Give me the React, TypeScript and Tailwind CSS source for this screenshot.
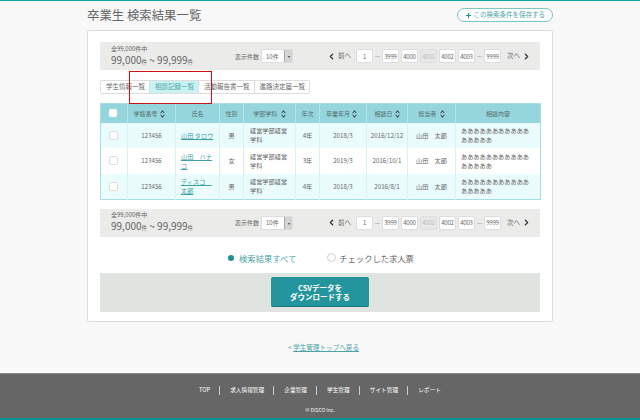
import { ChevronLeft, ChevronRight, Plus } from 'lucide-react';

const ROWS = [
  { name: '山田 タロウ', sex: '男', year: '4年', grad: '2018/3', date: '2016/12/12', tint: true },
  { name: '山田　ハナコ', sex: '女', year: '3年', grad: '2019/3', date: '2016/10/1', tint: false },
  { name: 'ディスコ　太郎', sex: '男', year: '4年', grad: '2018/3', date: '2016/8/1', tint: true },
];

const TABS = ['学生情報一覧', '相談記録一覧', '活動報告書一覧', '進路決定届一覧'];
const FOOTER = ['TOP', '求人情報管理', '企業管理', '学生管理', 'サイト管理', 'レポート'];

function Sort() {
  return (
    <svg viewBox="0 0 6 10" className="ml-[2px] inline-block h-[8px] w-[5px] align-[-2px]" fill="none" stroke="#3f5558" strokeWidth="1.3">
      <path d="M0.7 4l2.3-3 2.3 3M0.7 6l2.3 3 2.3-3" />
    </svg>
  );
}

function PageBox({ label, off }: { label: string; off?: boolean }) {
  return (
    <span className={`flex h-[14px] w-[17px] items-center justify-center rounded-[2px] border border-[#ddd] text-[6px] tracking-[-0.2px] ${off ? 'bg-[#e8e8e8] text-[#bbb]' : 'bg-white text-[#666]'}`}>
      {label}
    </span>
  );
}

function ResultBar() {
  return (
    <div className="flex h-[28px] items-center bg-[#ebecea] pr-[9px] pl-[11px] text-[#666]">
      <div className="w-[124px] shrink-0 pt-[1px]">
        <div className="text-[6px] leading-[8px]">全99,000件中</div>
        <div className="text-[10px] leading-[13px] whitespace-nowrap">
          99,000<span className="text-[5.5px]">件</span> ~ 99,999<span className="text-[5.5px]">件</span>
        </div>
      </div>
      <span className="text-[6px] whitespace-nowrap">表示件数</span>
      <div className="ml-[2px] flex h-[14px] w-[32px] items-center justify-between rounded-[2px] border border-[#ddd] bg-white pl-[4px] text-[6px]">
        10件
        <span className="flex h-full w-[8px] items-center justify-center border-l border-[#aaa] bg-[#d4d4d4] text-[4px] text-[#333]">▾</span>
      </div>
      <div className="ml-auto flex items-center gap-[2px]">
        <ChevronLeft className="h-[9px] w-[9px] text-[#333]" strokeWidth={3.5} />
        <span className="mr-[3px] text-[6.5px]">前へ</span>
        <PageBox label="1" />
        <span className="text-[5px]">…</span>
        <PageBox label="3999" />
        <PageBox label="4000" />
        <PageBox label="4001" off />
        <PageBox label="4002" />
        <PageBox label="4003" />
        <span className="text-[5px]">…</span>
        <PageBox label="9999" />
        <span className="ml-[4px] text-[6.5px]">次へ</span>
        <ChevronRight className="h-[9px] w-[9px] text-[#333]" strokeWidth={3.5} />
      </div>
    </div>
  );
}

export default function App() {
  return (
    <div className="flex h-[420px] w-[640px] flex-col overflow-hidden border-t border-[#0fa3a3] bg-[#f8f8f8] font-['Noto_Sans_CJK_JP',sans-serif] text-[#666]">
      <div className="mx-auto w-[466px]">
        <div className="flex h-[29px] items-center justify-between pb-[1px]">
          <h1 className="text-[12.4px] font-normal">卒業生 検索結果一覧</h1>
          <button className="flex h-[14px] items-center gap-[2px] rounded-full border border-[#7cc5c9] bg-white px-[7px] text-[6.5px] text-[#4ea3a8]">
            <Plus className="h-[7px] w-[7px] text-[#1f8f96]" strokeWidth={4} />
            この検索条件を保存する
          </button>
        </div>

        <main className="relative h-[292px] rounded-[2px] border border-[#ddd] bg-white px-[12px] pt-[11px]">
          <ResultBar />

          <div className="mt-[10px] flex h-[14px] w-fit rounded-[2px] border border-[#ddd] bg-white text-[6.5px]">
            {TABS.map((tab, i) => (
              <span key={tab} className={`flex items-center pr-[4px] pl-[5px] ${i > 0 ? 'border-l border-[#ddd]' : ''} ${i === 1 ? 'bg-[#c9f2f2] text-[#4ea3a8]' : ''}`}>
                {tab}
              </span>
            ))}
          </div>

          <table className="mt-[9px] w-[440px] table-fixed border-collapse border border-[#a5dfe3] text-[6.2px]">
            <colgroup>
              <col className="w-[27px]" />
              <col className="w-[48px]" />
              <col className="w-[44px]" />
              <col className="w-[24px]" />
              <col className="w-[52px]" />
              <col className="w-[24px]" />
              <col className="w-[47px]" />
              <col className="w-[41px]" />
              <col className="w-[48px]" />
              <col className="w-[85px]" />
            </colgroup>
            <thead>
              <tr className="h-[19px] bg-[#95d5dc] text-[6px] text-[#55706f]">
                <th className="border-r border-[#b5e3e7] font-normal">
                  <span className="ml-[8px] block h-[8px] w-[8px] rounded-[2px] bg-white" />
                </th>
                <th className="border-r border-[#b5e3e7] pr-[5px] font-normal">学籍番号<Sort /></th>
                <th className="border-r border-[#b5e3e7] font-normal">氏名</th>
                <th className="border-r border-[#b5e3e7] font-normal">性別</th>
                <th className="border-r border-[#b5e3e7] font-normal">学部学科 <Sort /></th>
                <th className="border-r border-[#b5e3e7] font-normal">年次</th>
                <th className="border-r border-[#b5e3e7] pr-[3px] font-normal">卒業年月<Sort /></th>
                <th className="border-r border-[#b5e3e7] font-normal">相談日<Sort /></th>
                <th className="border-r border-[#b5e3e7] font-normal">担当者 <Sort /></th>
                <th className="font-normal">相談内容</th>
              </tr>
            </thead>
            <tbody>
              {ROWS.map((row) => (
                <tr key={row.name} className={`h-[25.6px] leading-[9px] ${row.tint ? 'bg-[#eafcfc]' : 'bg-white'}`}>
                  <td className="border-r border-[#d8f2f3]">
                    <span className="ml-[8px] block h-[9px] w-[9px] rounded-[2px] border border-[#ddd] bg-white" />
                  </td>
                  <td className="border-r border-[#d8f2f3] text-center">123456</td>
                  <td className="border-r border-[#d8f2f3] px-[5px] text-[#3f9ea5] underline">{row.name}</td>
                  <td className="border-r border-[#d8f2f3] text-center">{row.sex}</td>
                  <td className="border-r border-[#d8f2f3] pr-[5px] pl-[6px]">経営学部経営学科</td>
                  <td className="border-r border-[#d8f2f3] text-center">{row.year}</td>
                  <td className="border-r border-[#d8f2f3] text-center">{row.grad}</td>
                  <td className="border-r border-[#d8f2f3] text-center">{row.date}</td>
                  <td className="border-r border-[#d8f2f3] text-center whitespace-pre">山田　太郎</td>
                  <td className="px-[5px]">ああああああああああああああああ</td>
                </tr>
              ))}
            </tbody>
          </table>

          <div className="mt-[9px]">
            <ResultBar />
          </div>

          <div className="mt-[11px] flex h-[20px] items-center justify-center gap-[31px] text-[8.3px]">
            <label className="flex items-center gap-[4px] text-[#4ea3a8]">
              <span className="flex h-[9px] w-[9px] items-center justify-center rounded-full bg-white">
                <span className="h-[6px] w-[6px] rounded-full bg-[#1f8f96]" />
              </span>
              検索結果すべて
            </label>
            <label className="flex items-center gap-[3px]">
              <span className="h-[9px] w-[9px] rounded-full border border-[#ccc] bg-white" />
              チェックした求人票
            </label>
          </div>

          <div className="mt-[5px] flex h-[39px] items-center justify-center bg-[#e0e4e1]">
            <button className="h-[30px] w-[98px] rounded-[2px] border-b border-[#17777d] bg-[#24959d] text-[7.5px] leading-[9px] font-bold text-white">
              CSVデータを
              <br />
              ダウンロードする
            </button>
          </div>

          <div className="absolute top-[40px] left-[41px] h-[33px] w-[83px] border border-[#d01010]" />
        </main>

        <div className="mt-[21px] pl-[7px] text-center text-[6.6px] text-[#4ea3a8]">
          &lt; <span className="underline">学生管理トップへ戻る</span>
        </div>
      </div>

      <footer className="mt-auto flex h-[47px] flex-col items-center border-t border-[#888] border-b-[2px] border-b-[#0f8f94] bg-[#666] text-white">
        <div className="mt-[12px] flex items-center text-[5.7px]">
          {FOOTER.map((item, i) => (
            <span key={item} className={i > 0 ? 'ml-[9px] border-l border-[#ccc] pl-[10px]' : ''}>
              {item}
            </span>
          ))}
        </div>
        <div className="mt-[11px] text-[5px]">© DISCO Inc.</div>
      </footer>
    </div>
  );
}
